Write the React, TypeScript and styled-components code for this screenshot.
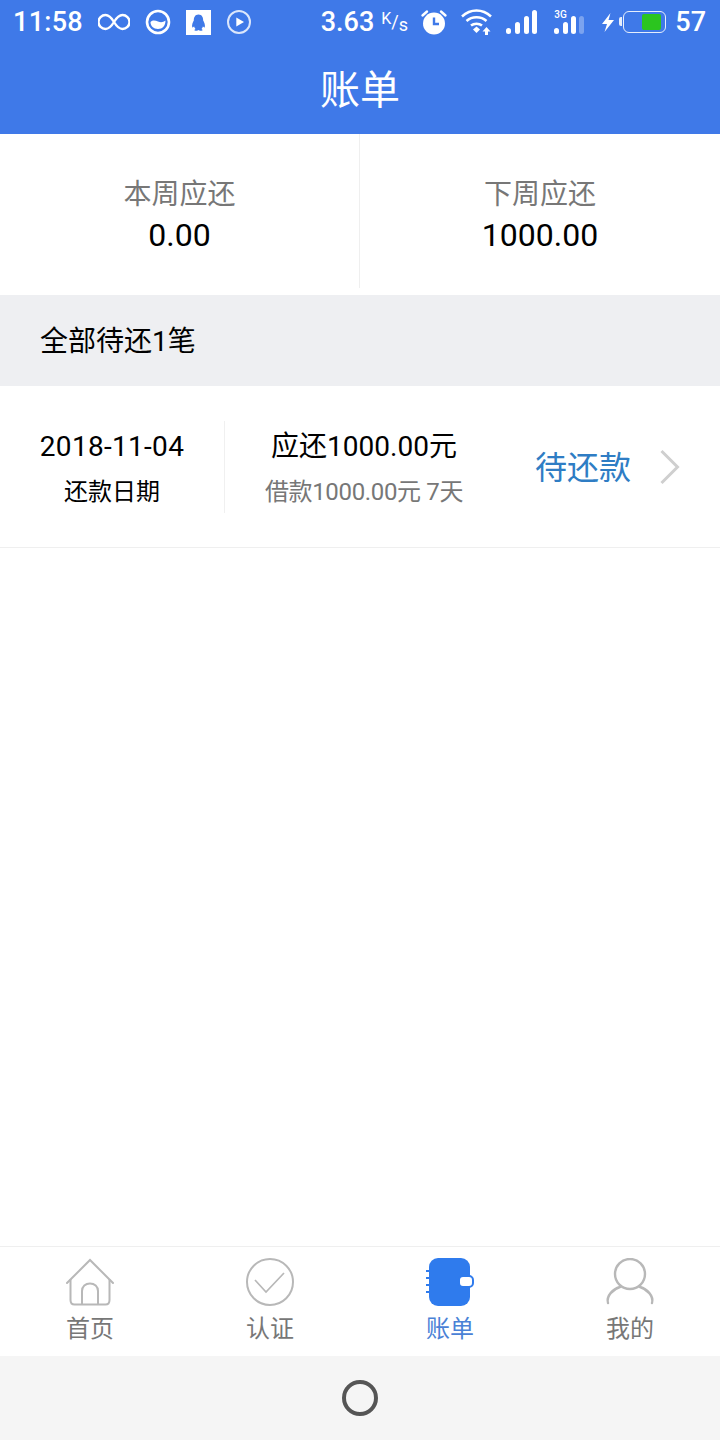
import React from 'react'
import styled, { createGlobalStyle } from 'styled-components'

const GlobalStyle = createGlobalStyle`
  html, body {
    margin: 0;
    padding: 0;
    background: #fff;
  }
  * {
    box-sizing: border-box;
  }
`

const FONT = `Roboto, "Noto Sans CJK SC", sans-serif`

export default function App() {
  return (
    <Page>
      <GlobalStyle />
      <Header>
        <StatusBar>
          <StatusLeft>
            <Clock>11:58</Clock>
            <svg width="32" height="18" viewBox="0 0 32 18" fill="none" stroke="#fff" strokeWidth="2.400">
              <path d="M16 9C13 4 10.500 2 7.500 2A7 7 0 0 0 7.500 16C10.500 16 13 14 16 9C19 4 21.500 2 24.500 2A7 7 0 0 1 24.500 16C21.500 16 19 14 16 9Z" />
            </svg>
            <BrowserIcon width="26" height="26" viewBox="0 0 26 26">
              <circle cx="13" cy="13" r="11" fill="none" stroke="#fff" strokeWidth="2.600" />
              <path d="M5.500 13C8 10.500 10.500 11.500 13 12.500C15.500 13.500 18 13.500 20.500 11.500C20.500 16.500 17.500 20 13 20C8.500 20 5.500 17 5.500 13Z" fill="#fff" />
            </BrowserIcon>
            <QqIcon width="25" height="25" viewBox="0 0 25 25">
              <rect width="25" height="25" fill="#fff" />
              <path d="M12.500 4.500C9 4.500 7.800 7.500 7.800 10.500C6.800 12.500 5.500 15 6.300 17.500C7 17.800 7.800 16.800 8 16.300C8.300 17.500 8.800 18.300 9.500 19C8.300 19.500 7.800 20.500 9.500 20.800C11 21 12 20.300 12.500 20C13 20.300 14 21 15.500 20.800C17.200 20.500 16.700 19.500 15.500 19C16.200 18.300 16.700 17.500 17 16.300C17.200 16.800 18 17.800 18.700 17.500C19.500 15 18.200 12.500 17.200 10.500C17.200 7.500 16 4.500 12.500 4.500Z" fill="#3f79e8" />
            </QqIcon>
            <PlayIcon width="26" height="26" viewBox="0 0 26 26">
              <circle cx="13" cy="13" r="11" fill="none" stroke="#dbe6fb" strokeWidth="2" />
              <path d="M10.300 8.500L18 13L10.300 17.500Z" fill="#fff" />
            </PlayIcon>
          </StatusLeft>
          <StatusRight>
            <Speed>
              3.63
              <SpeedUnit>
                <sup>K</sup>/<sub>s</sub>
              </SpeedUnit>
            </Speed>
            <AlarmIcon width="28" height="26" viewBox="0 0 28 26">
              <circle cx="14" cy="14.500" r="11" fill="#fff" />
              <path d="M14 8.500V15H19" fill="none" stroke="#3f79e8" strokeWidth="2.400" />
              <path d="M2.500 6.500L7 2.500M25.500 6.500L21 2.500" stroke="#fff" strokeWidth="2.400" strokeLinecap="round" />
            </AlarmIcon>
            <WifiIcon width="32" height="26" viewBox="0 0 32 26" fill="none">
              <path d="M1 7.500C9.500 -0.500 21.500 -0.500 30 7.500M5.500 12C11 7 20 7 25.500 12M10 16.500C13 14 18 14 21 16.500" stroke="#fff" strokeWidth="2.500" />
              <path d="M12 20.500L15.500 17.500L19 20.500L15.500 24Z" fill="#fff" />
              <path d="M25.500 18L29.500 22.500H27V26H24V22.500H21.500Z" fill="#fff" />
            </WifiIcon>
            <MainSignal>
              <SignalBar $height={6} />
              <SignalBar $height={12} />
              <SignalBar $height={18} />
              <SignalBar $height={24} />
            </MainSignal>
            <SecondSignal>
              <NetworkLabel>3G</NetworkLabel>
              <Signal>
                <SignalBar $height={6} />
                <SignalBar $height={12} />
                <SignalBar $height={18} />
                <SignalBar $height={18} $dim />
              </Signal>
            </SecondSignal>
            <BoltIcon width="14" height="19" viewBox="0 0 14 19">
              <path d="M9.500 0L1 11H6L3.500 19L13 7H7.500Z" fill="#fff" />
            </BoltIcon>
            <Battery>
              <BatteryFill />
            </Battery>
            <BatteryText>57</BatteryText>
          </StatusRight>
        </StatusBar>
        <Title>账单</Title>
      </Header>

      <Summary>
        <SummaryCell>
          <SummaryLabel>本周应还</SummaryLabel>
          <SummaryValue>0.00</SummaryValue>
        </SummaryCell>
        <SummaryCell $divided>
          <SummaryLabel>下周应还</SummaryLabel>
          <SummaryValue>1000.00</SummaryValue>
        </SummaryCell>
      </Summary>

      <SectionBar>全部待还1笔</SectionBar>

      <BillRow>
        <DateColumn>
          <DateText>2018-11-04</DateText>
          <DateLabel>还款日期</DateLabel>
        </DateColumn>
        <AmountColumn>
          <AmountText>应还1000.00元</AmountText>
          <LoanText>借款1000.00元 7天</LoanText>
        </AmountColumn>
        <StatusText>待还款</StatusText>
        <ChevronIcon width="22" height="36" viewBox="0 0 22 36">
          <path d="M2.500 2L18.500 18L2.500 34" fill="none" stroke="#cfcfcf" strokeWidth="3" />
        </ChevronIcon>
      </BillRow>

      <Spacer />

      <TabBar>
        <Tab>
          <svg width="50" height="48" viewBox="0 0 50 48" fill="none" stroke="#b8b8b8" strokeWidth="2">
            <path d="M2 25L25 2L48 25" strokeLinecap="round" />
            <path d="M5.500 21V42C5.500 44.500 7 46.500 9.500 46.500H40.500C43 46.500 44.500 44.500 44.500 42V21" />
            <path d="M17 46V33C17 28.500 20.500 25.500 25 25.500C29.500 25.500 33 28.500 33 33V46" />
          </svg>
          <TabLabel>首页</TabLabel>
        </Tab>
        <Tab>
          <svg width="50" height="48" viewBox="0 0 50 48" fill="none" stroke="#b8b8b8">
            <circle cx="25" cy="24" r="23" strokeWidth="2" />
            <path d="M10 22L21 34L39 15" strokeWidth="1.700" />
          </svg>
          <TabLabel>认证</TabLabel>
        </Tab>
        <Tab>
          <svg width="50" height="48" viewBox="0 0 50 48">
            <rect x="4" y="0" width="41" height="48" rx="9" fill="#2f7bed" />
            <path d="M1 13H6M1 20H6M1 27H6M1 34H6" stroke="#2f7bed" strokeWidth="2" />
            <rect x="34" y="18" width="14" height="11" rx="4" fill="#fff" stroke="#2f7bed" strokeWidth="2" />
          </svg>
          <TabLabel $active>账单</TabLabel>
        </Tab>
        <Tab>
          <svg width="50" height="48" viewBox="0 0 50 48" fill="none" stroke="#b8b8b8" strokeWidth="2.400">
            <circle cx="25" cy="16" r="15" />
            <path d="M15 29C8 31 1 38 3 45M35 29C42 31 49 38 47 45" strokeLinecap="round" />
          </svg>
          <TabLabel>我的</TabLabel>
        </Tab>
      </TabBar>

      <NavBar>
        <HomeButton />
      </NavBar>
    </Page>
  )
}

const Page = styled.div`
  display: flex;
  flex-direction: column;
  width: 720px;
  height: 1440px;
  overflow: hidden;
  background: #fff;
  font-family: ${FONT};
`

const Header = styled.header`
  display: flex;
  flex-direction: column;
  flex: none;
  height: 134px;
  background: #3f79e8;
  color: #fff;
`

const StatusBar = styled.div`
  display: flex;
  justify-content: space-between;
  align-items: center;
  height: 44px;
  padding: 0 14px 0 13px;
`

const StatusLeft = styled.div`
  display: flex;
  align-items: center;
`

const StatusRight = styled.div`
  display: flex;
  align-items: center;
`

const Clock = styled.span`
  width: 85px;
  font-size: 27px;
  font-weight: 500;
  letter-spacing: 0.3px;
  line-height: 44px;
`

const BrowserIcon = styled.svg`
  margin-left: 15px;
`

const QqIcon = styled.svg`
  margin-left: 15px;
`

const PlayIcon = styled.svg`
  margin-left: 15px;
`

const Speed = styled.span`
  display: flex;
  align-items: center;
  font-size: 27px;
  font-weight: 500;
  line-height: 44px;
`

const SpeedUnit = styled.span`
  width: 27px;
  margin-left: 7px;
  font-size: 18px;
  font-weight: 400;
  line-height: 20px;
  white-space: nowrap;

  sup {
    font-size: 16px;
    vertical-align: 4px;
    line-height: 0;
  }

  sub {
    font-size: 18px;
    vertical-align: -3px;
    line-height: 0;
  }
`

const AlarmIcon = styled.svg`
  margin-left: 12px;
`

const WifiIcon = styled.svg`
  margin-left: 13px;
`

const Signal = styled.div`
  display: flex;
  align-items: flex-end;
  justify-content: space-between;
  width: 30px;
  height: 24px;
`

const MainSignal = styled(Signal)`
  width: 31px;
  margin-left: 13px;
`

const SignalBar = styled.span<{ $height: number; $dim?: boolean }>`
  width: 5px;
  height: ${(p) => p.$height}px;
  border-radius: 2.5px;
  background: ${(p) => (p.$dim ? '#7ba3ef' : '#fff')};
`

const SecondSignal = styled.div`
  position: relative;
  display: flex;
  margin-left: 17px;
`

const NetworkLabel = styled.span`
  position: absolute;
  top: 0;
  left: 0;
  font-size: 10px;
  font-weight: 500;
  line-height: 10px;
`

const BoltIcon = styled.svg`
  margin-left: 17px;
`

const Battery = styled.div`
  position: relative;
  width: 43px;
  height: 22px;
  margin-left: 8px;
  padding: 2px;
  border: 1.500px solid #e6eefc;
  border-radius: 6px;

  &::before {
    content: '';
    position: absolute;
    top: 5px;
    left: -5px;
    width: 3px;
    height: 9px;
    border-radius: 2px 0 0 2px;
    background: #e6eefc;
  }
`

const BatteryFill = styled.div`
  width: 19px;
  height: 100%;
  margin-left: 15.500px;
  border-radius: 2px;
  background: #2bc51f;
`

const BatteryText = styled.span`
  margin-left: 9px;
  font-size: 27px;
  font-weight: 500;
  line-height: 44px;
`

const Title = styled.h1`
  margin: 0;
  font-size: 40px;
  font-weight: 400;
  line-height: 94px;
  text-align: center;
`

const Summary = styled.section`
  display: grid;
  flex: none;
  grid-template-columns: 359px 361px;
  height: 154px;
  margin-bottom: 7px;
`

const SummaryCell = styled.div<{ $divided?: boolean }>`
  display: flex;
  flex-direction: column;
  align-items: center;
  padding-top: 42px;
  border-left: ${(p) => (p.$divided ? '1px solid #efefef' : 'none')};
`

const SummaryLabel = styled.div`
  font-size: 28px;
  line-height: 38px;
  color: #777;
`

const SummaryValue = styled.div`
  font-size: 32px;
  line-height: 42px;
  color: #000;
`

const SectionBar = styled.div`
  flex: none;
  height: 91px;
  padding-left: 40px;
  background: #eeeff2;
  font-size: 28px;
  line-height: 93px;
  color: #000;
`

const BillRow = styled.section`
  display: flex;
  flex: none;
  align-items: center;
  height: 162px;
  border-bottom: 1px solid #efefef;
`

const DateColumn = styled.div`
  display: flex;
  flex-direction: column;
  align-items: center;
  width: 225px;
  height: 92px;
  border-right: 1px solid #f0f0f0;
`

const DateText = styled.div`
  font-size: 28px;
  letter-spacing: 0.3px;
  line-height: 52px;
  color: #000;
`

const DateLabel = styled.div`
  font-size: 24px;
  line-height: 38px;
  color: #000;
`

const AmountColumn = styled.div`
  display: flex;
  flex-direction: column;
  align-items: center;
  width: 278px;
  height: 92px;
`

const AmountText = styled.div`
  font-size: 28px;
  line-height: 52px;
  color: #000;
`

const LoanText = styled.div`
  font-size: 24px;
  letter-spacing: -0.35px;
  line-height: 38px;
  color: #777;
`

const StatusText = styled.div`
  width: 125px;
  padding: 2px 0 0 32px;
  font-size: 32px;
  line-height: 44px;
  white-space: nowrap;
  color: #2f7dc4;
`

const ChevronIcon = styled.svg`
  margin-left: 31px;
`

const Spacer = styled.div`
  flex: 1;
`

const TabBar = styled.nav`
  display: grid;
  flex: none;
  grid-template-columns: repeat(4, 180px);
  height: 110px;
  border-top: 1px solid #efefef;
`

const Tab = styled.div`
  display: flex;
  flex-direction: column;
  align-items: center;
  padding-top: 11px;
`

const TabLabel = styled.span<{ $active?: boolean }>`
  margin-top: 5px;
  font-size: 24px;
  line-height: 36px;
  color: ${(p) => (p.$active ? '#4a82d6' : '#777')};
`

const NavBar = styled.div`
  display: flex;
  flex: none;
  justify-content: center;
  align-items: center;
  height: 84px;
  background: #f5f5f5;
`

const HomeButton = styled.div`
  width: 36px;
  height: 36px;
  border: 4px solid #555;
  border-radius: 50%;
`
